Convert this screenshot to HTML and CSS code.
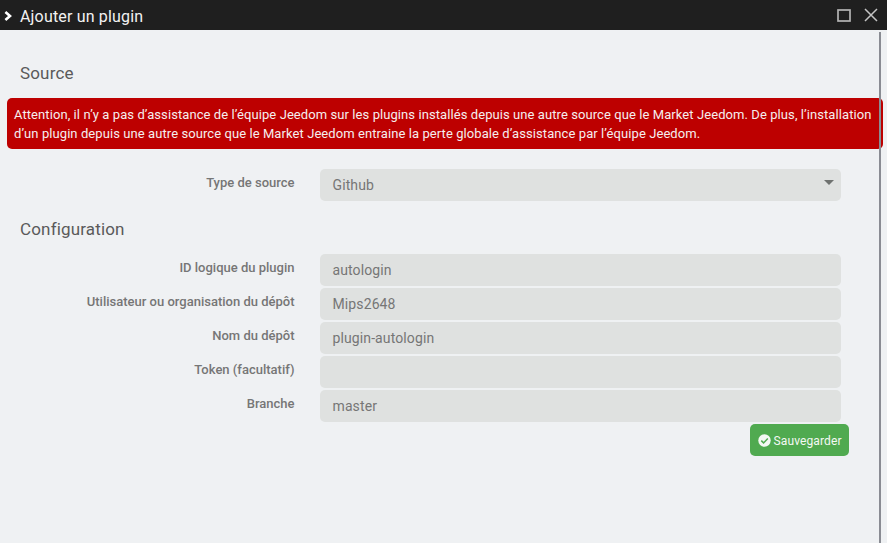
FILE: index.html
```html
<!DOCTYPE html>
<html lang="fr">
<head>
<meta charset="utf-8">
<title>Ajouter un plugin</title>
<link rel="stylesheet" href="styles.css">
</head>
<body>
<div class="dialog">
  <header class="titlebar">
    <svg class="chevron" width="8" height="10" viewBox="0 0 8 10"><path d="M1.4 1l4.6 4-4.6 4" fill="none" stroke="#fff" stroke-width="2.6"/></svg>
    <span class="title">Ajouter un plugin</span>
    <svg class="maximize" width="14" height="13" viewBox="0 0 14 13"><rect x="1" y="1" width="12" height="11" fill="none" stroke="#b4b4b4" stroke-width="1.7"/></svg>
    <svg class="close" width="14" height="14" viewBox="0 0 14 14"><path d="M1 1l12 12M13 1L1 13" fill="none" stroke="#c4c4c4" stroke-width="1.5"/></svg>
  </header>
  <main class="content">
    <h2 class="legend">Source</h2>
    <div class="alert">Attention, il n’y a pas d’assistance de l’équipe Jeedom sur les plugins installés depuis une autre source que le Market Jeedom. De plus, l’installation<br>d’un plugin depuis une autre source que le Market Jeedom entraine la perte globale d’assistance par l’équipe Jeedom.</div>
    <div class="row"><label class="label">Type de source</label><div class="field select">Github<i class="caret"></i></div></div>
    <h2 class="legend config">Configuration</h2>
    <div class="rows">
      <div class="row"><label class="label">ID logique du plugin</label><div class="field">autologin</div></div>
      <div class="row"><label class="label">Utilisateur ou organisation du dépôt</label><div class="field">Mips2648</div></div>
      <div class="row"><label class="label">Nom du dépôt</label><div class="field">plugin-autologin</div></div>
      <div class="row"><label class="label">Token (facultatif)</label><div class="field"></div></div>
      <div class="row"><label class="label">Branche</label><div class="field">master</div></div>
    </div>
    <div class="actions">
      <button class="save" type="button"><svg width="13" height="13" viewBox="0 0 13 13"><circle cx="6.5" cy="6.5" r="6.2" fill="#f4f8f4"/><path d="M3.3 6.6l2.3 2.3 4.2-4.3" fill="none" stroke="#50aa50" stroke-width="1.5"/></svg><span>Sauvegarder</span></button>
    </div>
  </main>
  <div class="scrollbar"></div>
</div>
</body>
</html>
```
FILE: styles.css
```css
* { box-sizing: border-box; }
body {
  margin: 0;
  background: #eff1f3;
  color: #767676;
  font-family: Roboto, "Liberation Sans", sans-serif;
  font-size: 14px;
}
.dialog { position: relative; height: 543px; overflow: hidden; }
.titlebar {
  display: flex;
  align-items: center;
  height: 30px;
  padding: 0 9px 0 4px;
  background: #1f1f1f;
}
.chevron { margin-top: 2px; }
.title {
  margin: 3px auto 0 8px;
  color: #f2f2f2;
  font-size: 16px;
  letter-spacing: 0.17px;
  line-height: 20px;
}
.maximize { margin-right: 13px; }
.content { padding: 33px 0 0; }
.legend {
  margin: 0 0 0 20px;
  color: #5a5a5a;
  font-size: 17px;
  font-weight: 400;
  letter-spacing: 0.16px;
  line-height: 20px;
}
.alert {
  width: 876px;
  height: 51px;
  margin: 15px 0 20px 7px;
  padding: 7px 0 0 7px;
  border-radius: 5px;
  background: #bd0000;
  color: #f5eeee;
  font-size: 13px;
  letter-spacing: 0.078px;
  line-height: 19px;
  white-space: nowrap;
}
.row { display: flex; align-items: flex-start; height: 32px; }
.label {
  width: 294.5px;
  margin-right: 25.5px;
  padding-top: 5px;
  font-size: 13px;
  font-weight: 500;
  line-height: 18px;
  text-align: right;
}
.field {
  display: flex;
  align-items: center;
  width: 521px;
  height: 32px;
  padding: 0 7px 0 12.5px;
  border-radius: 5px;
  background: #dfe1e0;
  letter-spacing: 0.11px;
}
.caret {
  margin: -5px 0 0 auto;
  border: 5px solid transparent;
  border-top-color: #6f7270;
  border-bottom: 0;
}
.config { margin-top: 18px; }
.rows { display: flex; flex-direction: column; gap: 2px; margin-top: 15px; }
.actions { display: flex; justify-content: flex-end; margin: 2px 38px 0 0; }
.save {
  display: flex;
  align-items: center;
  gap: 2.5px;
  width: 99px;
  height: 32px;
  padding: 1px 0 0 8px;
  border: 0;
  border-radius: 5px;
  background: #50aa50;
  color: #f4f8f4;
  font: 400 12px Roboto, sans-serif;
  letter-spacing: 0.12px;
}
.scrollbar {
  position: absolute;
  top: 32px;
  right: 6px;
  bottom: 0;
  width: 2px;
  background: #8a8c93;
}
```
